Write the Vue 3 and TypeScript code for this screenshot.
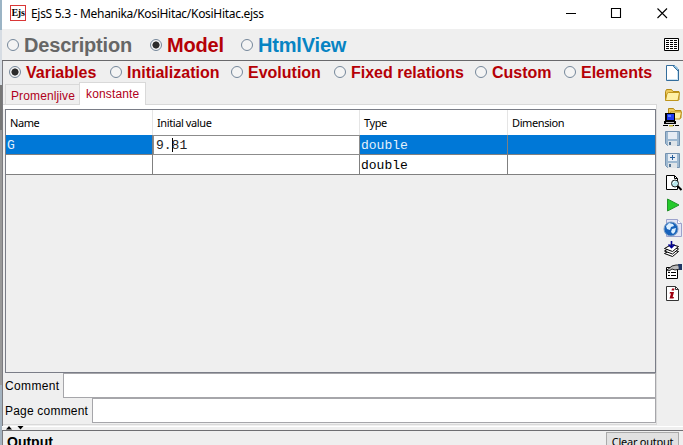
<script setup lang="ts">
import { ref } from 'vue'

interface Choice { label: string; tone: string }
const views: Choice[] = [
  { label: 'Description', tone: 'grey' },
  { label: 'Model', tone: 'red' },
  { label: 'HtmlView', tone: 'blue' },
]
const sections: string[] = ['Variables', 'Initialization', 'Evolution', 'Fixed relations', 'Custom', 'Elements']
const view = ref('Model')
const section = ref('Variables')
</script>

<template>
  <div class="window">
    <div class="edge"></div>
    <div class="frame">
      <header class="titlebar">
        <span class="logo">Ejs</span>
        <span class="title">EjsS 5.3 - Mehanika/KosiHitac/KosiHitac.ejss</span>
        <svg class="controls" width="104" height="12" viewBox="0 0 104 12" fill="none" stroke="#000" stroke-width="1.1">
          <path d="M0 5.5H10M45.500 .5h9v9h-9z" />
          <path d="M91.500 .5l9.500 9.500M101 .5L91.500 10" />
        </svg>
      </header>

      <nav class="views">
        <div v-for="v in views" :key="v.label" class="radio" :class="v.tone" @click="view = v.label">
          <i class="dot" :class="{ on: view === v.label }"></i><span>{{ v.label }}</span>
        </div>
        <svg class="gridicon" width="15" height="13" viewBox="0 0 15 13">
          <path d="M.5.5h14v12H.5z" fill="#fff" stroke="#000" />
          <path d="M2 2.500h11M2 4.500h11M2 6.500h11M2 8.500h11M2 10.500h11" stroke="#000" stroke-dasharray="3 1" />
        </svg>
      </nav>

      <main class="body">
        <section class="left">
          <nav class="sections">
            <div v-for="s in sections" :key="s" class="radio red" @click="section = s">
              <i class="dot" :class="{ on: section === s }"></i><span>{{ s }}</span>
            </div>
          </nav>
          <div class="tabs">
            <div class="tab first">Promenljive</div>
            <div class="tab active">konstante</div>
          </div>
          <div class="panel">
            <div class="table">
              <div class="row head"><div><span>Name</span></div><div><span>Initial value</span></div><div><span>Type</span></div><div><span>Dimension</span></div></div>
              <div class="row selected"><div>G</div><div class="edit">9.<i class="caret"></i>81</div><div>double</div><div></div></div>
              <div class="row"><div></div><div></div><div>double</div><div></div></div>
            </div>
            <div class="field"><label class="c1">Comment</label><div class="input"></div></div>
            <div class="field"><label class="c2">Page comment</label><div class="input"></div></div>
          </div>
        </section>

        <aside class="tools">
          <svg class="t1" width="20" height="18" viewBox="0 0 20 18">
            <path d="M3.500 1.500h8l4 4v11h-12z" fill="#fff" stroke="#336d9c" /><path d="M4.500 15.500h10V6" fill="none" stroke="#c8e2f4" /><path d="M10 2l5 5V4l-2-2z" fill="#8dbddd" /><path d="M10.500 1.500v1l4.500 4.500" fill="none" stroke="#336d9c" />
          </svg>
          <svg class="t2" width="20" height="18" viewBox="0 0 20 18">
            <path d="M2.500 14V5.500l1-2h5l1.500 2h6V14z" fill="#edc95a" stroke="#b58b16" /><path d="M2.500 14.500l1.500-7 1.500-1h11l-1.500 8z" fill="#fff0a5" stroke="#bf951c" />
          </svg>
          <svg class="t3" width="20" height="20" viewBox="0 0 20 20">
            <path d="M5.500 9V1.500h5l1.500 2h6V11H6z" fill="#edc95a" stroke="#b58b16" /><path d="M6.500 11l1-6h11l-1.500 7H7z" fill="#fff0a5" stroke="#bf951c" /><path d="M2 6h10v8H2zM1 14h12v3H1z" fill="#000" /><path d="M4 7h7v6H4z" fill="#2039f0" /><path d="M5 8h3v2H5z" fill="#5a83ff" /><path d="M0 18.500h16" stroke="#000" stroke-dasharray="5 1" /><path d="M3 15.500h8" stroke="#bbb" /><path d="M6 18h4v1.500H6z" fill="#c9b830" />
          </svg>
          <svg v-for="n in 2" :key="n" :class="'t' + (n + 3)" width="20" height="18" viewBox="0 0 20 18">
            <path d="M2.500 1.500h14v14h-12l-2-2z" fill="#9db8d0" stroke="#7492b0" /><path d="M5 2h9v7H5z" fill="#e7edf4" /><path d="M5 11h9v5H5z" fill="#dfe4e8" /><path d="M6 12h2v3H6z" fill="#537290" />
            <path v-if="n === 2" d="M7 5.500h5M9.500 3v5" stroke="#285f9b" />
          </svg>
          <svg class="t6" width="20" height="18" viewBox="0 0 20 18">
            <path d="M3.500 1.500h8l3 3v11h-11z" fill="#fff" stroke="#000" /><path d="M11.500 1.500v3h3" fill="none" stroke="#000" /><circle cx="12" cy="9.500" r="3.500" fill="#b9e8ed" stroke="#222" /><path d="M10 9l2-2" stroke="#fff" /><path d="M14.500 12l4 4" stroke="#000" stroke-width="2" />
          </svg>
          <svg class="t7" width="20" height="18" viewBox="0 0 20 18"><path d="M4.500 3l11.500 6-11.500 6z" fill="#24cb2b" stroke="#23932b" /></svg>
          <svg class="t8" width="20" height="20" viewBox="0 0 20 20">
            <path d="M3.500 1.500h11l4 4v13h-15z" fill="#e3e5f5" stroke="#9ca2cc" /><path d="M14.500 1.500v4h4" fill="#fff" stroke="#9ca2cc" /><circle cx="8" cy="11" r="7" fill="#1762bb" stroke="#7c9fc6" /><path d="M3 8l3-3 4 1 1 2-3 1-1 3-3-1zM9 11l4-1-1 4-2 2-2-2z" fill="#dbefff" />
          </svg>
          <svg class="t9" width="20" height="18" viewBox="0 0 20 18">
            <g fill="#fff" stroke="#000"><path d="M1.500 13.500l7-4 7 2-6 5z" /><path d="M1.500 11l7-4 7 2-6 5z" /><path d="M1.500 8.500l7-4 7 2-6 5z" /></g><path d="M8.500 1v6M5.500 4.500l3 3 3-3" fill="none" stroke="#000091" stroke-width="1.600" />
          </svg>
          <svg class="t10" width="20" height="18" viewBox="0 0 20 18">
            <path d="M3.500 4.500h11v11h-11z" fill="#fff" stroke="#000" /><path d="M5 9.500h2m1 0h5M5 12.500h2m1 0h5" stroke="#000" /><path d="M4 7l5-4 4-1h4v4l-5 1-3-1-3 2z" fill="#bbb" stroke="#222" /><path d="M15 1h4v6h-3z" fill="#203765" />
          </svg>
          <svg class="t11" width="20" height="18" viewBox="0 0 20 18">
            <path d="M3.500 1.500h9l3 3v11h-12z" fill="#fff" stroke="#333" /><path d="M12.500 1.500v3h3" fill="none" stroke="#333" /><path d="M9 3.500h2.500l-.5 2H8.500zM7 7h4l-1.300 5H11l-.5 1.500H6.500L8 8.500H6.500z" fill="#a00010" />
          </svg>
        </aside>
      </main>

      <div class="splitter">
        <svg width="18" height="4" viewBox="0 0 18 4"><path d="M0 3.500L3 0l3 3.500zM11.500 0h6l-3 3.500z" fill="#000" /></svg>
      </div>
      <footer class="output"><strong>Output</strong><button>Clear output</button></footer>
    </div>
  </div>
</template>

<style>
html, body { margin: 0; overflow: hidden; }
</style>
<style scoped>
* { box-sizing: border-box; }
.window { display: flex; width: 683px; height: 445px; overflow: hidden; background: #efefef; font-family: "Liberation Sans", Arial, sans-serif; color: #000; }
.edge { width: 2px; flex: none; background: linear-gradient(#9bb4c5 0 30px, #d6dce3 30px 85px, #777 85px 130px, #999 130px 385px, #a4b3c0 385px); }
.frame { flex: 1; min-width: 0; display: flex; flex-direction: column; }
.titlebar { height: 29px; flex: none; display: flex; align-items: flex-start; background: #fff; padding: 5px 13px 0 8px; }
.logo { width: 16px; height: 16px; border: 1px solid #d93636; font: bold 10px/13px "Liberation Serif", serif; text-align: center; letter-spacing: -.3px; flex: none; }
.title { margin-left: 5px; font: 12px/17px "Noto Sans", "Open Sans", sans-serif; letter-spacing: -.3px; white-space: nowrap; }
.controls { margin: 3px 0 0 auto; flex: none; }
.views { height: 32px; flex: none; display: grid; grid-template-columns: 143px 91px 1fr 15px; padding: 0 4px 0 5px; border-bottom: 1px solid #69696c; align-items: center; }
.radio { display: flex; align-items: center; font-weight: bold; white-space: nowrap; }
.views .radio { font-size: 20px; gap: 5px; letter-spacing: -.18px; }
.views .radio span { padding-top: 1px; }
.grey { color: #666; }
.red { color: #b50006; }
.blue { color: #0784c3; }
.dot { width: 12px; height: 12px; border: 1px solid #75879a; border-radius: 50%; flex: none; display: block; background: #f4f4f4; }
.dot.on { background: radial-gradient(circle, #2b2b2b 0 3.200px, #f4f4f4 3.900px); }
.body { height: 365px; flex: none; display: flex; border-left: 1px solid #7b7b80; }
.left { width: 654px; flex: none; display: flex; flex-direction: column; }
.sections { height: 22px; display: grid; grid-template-columns: 101px 121px 103px 141px 89px 93px; padding-left: 6px; align-items: center; }
.sections .radio { font-size: 16px; gap: 5px; }
.sections .radio span { padding-top: 1px; }
.tabs { height: 22px; display: flex; align-items: flex-end; padding-left: 2px; border-bottom: 1px solid #d9d9d9; }
.tab { font-size: 12px; color: #b00020; border: 1px solid #d9d9d9; border-bottom: 0; padding-left: 5px; }
.first { width: 75px; height: 20px; line-height: 22px; letter-spacing: .12px; }
.active { width: 67px; height: 23px; line-height: 22px; margin: 0 0 -1px -1px; padding-left: 6px; background: #fff; letter-spacing: .15px; }
.panel { height: 320px; padding: 4px 0 0 2px; border: solid #d9d9d9; border-width: 0 1px 1px 0; background: #efefef; box-shadow: inset 0 4px #fff; }
.table { width: 651px; height: 264px; border: 1px solid #7a7d87; }
.row { display: grid; grid-template-columns: 147px 207px 148px 147px; height: 20px; background: #fff; font: 13px/21px "Liberation Mono", monospace; }
.row > div { height: 20px; border-right: 1px solid #808080; border-bottom: 1px solid #808080; padding-left: 1px; }
.row > div:last-child { border-right: 0; }
.row.head { height: 25px; font: 11px/26px "Noto Sans", "Open Sans", sans-serif; }
.row.head > div { height: 25px; border-bottom: 0; border-right-color: #e5e5e5; padding-left: 4px; }
.head span { letter-spacing: -.4px; }
.row.selected > div { background: #0078d7; color: #e4f1fb; }
.row.selected > .edit { background: #fff; color: #222; border: 1px solid #8c8c8c; padding-left: 2px; line-height: 20px; display: flex; }
.caret { width: 1px; height: 14px; margin: 2px -1px 0 0; background: #000; }
.field { display: flex; height: 25px; width: 651px; font-size: 12px; line-height: 26px; }
.field label { flex: none; white-space: nowrap; }
.c1 { width: 58px; letter-spacing: .35px; }
.c2 { width: 87px; letter-spacing: .2px; }
.input { flex: 1; background: #fff; border: 1px solid #a6a6aa; }
.tools { flex: 1; display: flex; flex-direction: column; padding-left: 6px; }
.tools svg { display: block; flex: none; }
.t1 { margin-top: 3px; }
.t2 { margin-top: 4px; }
.t3 { margin-top: 3px; }
.t4 { margin-top: 3px; }
.t5 { margin-top: 4px; }
.t6 { margin-top: 4px; }
.t7 { margin-top: 4px; }
.t8 { margin-top: 4px; }
.t9 { margin-top: 2px; }
.t10 { margin-top: 5px; }
.t11 { margin-top: 4px; }
.splitter { height: 5px; flex: none; border-bottom: 1px solid #6e6e72; box-shadow: inset 0 1px #fff; padding-left: 4px; }
.splitter svg { display: block; }
.output { height: 14px; flex: none; display: flex; align-items: flex-start; justify-content: space-between; border-left: 1px solid #7b7b80; padding: 1px 4px 0 4px; }
.output strong { font-size: 14px; line-height: 21px; }
.output button { width: 73px; height: 23px; padding: 0; border: 1px solid #aaa; background: #e1e1e1; font: 11px/17px "Noto Sans", "Open Sans", sans-serif; letter-spacing: -.25px; white-space: nowrap; display: flex; justify-content: center; align-items: flex-start; }
</style>
